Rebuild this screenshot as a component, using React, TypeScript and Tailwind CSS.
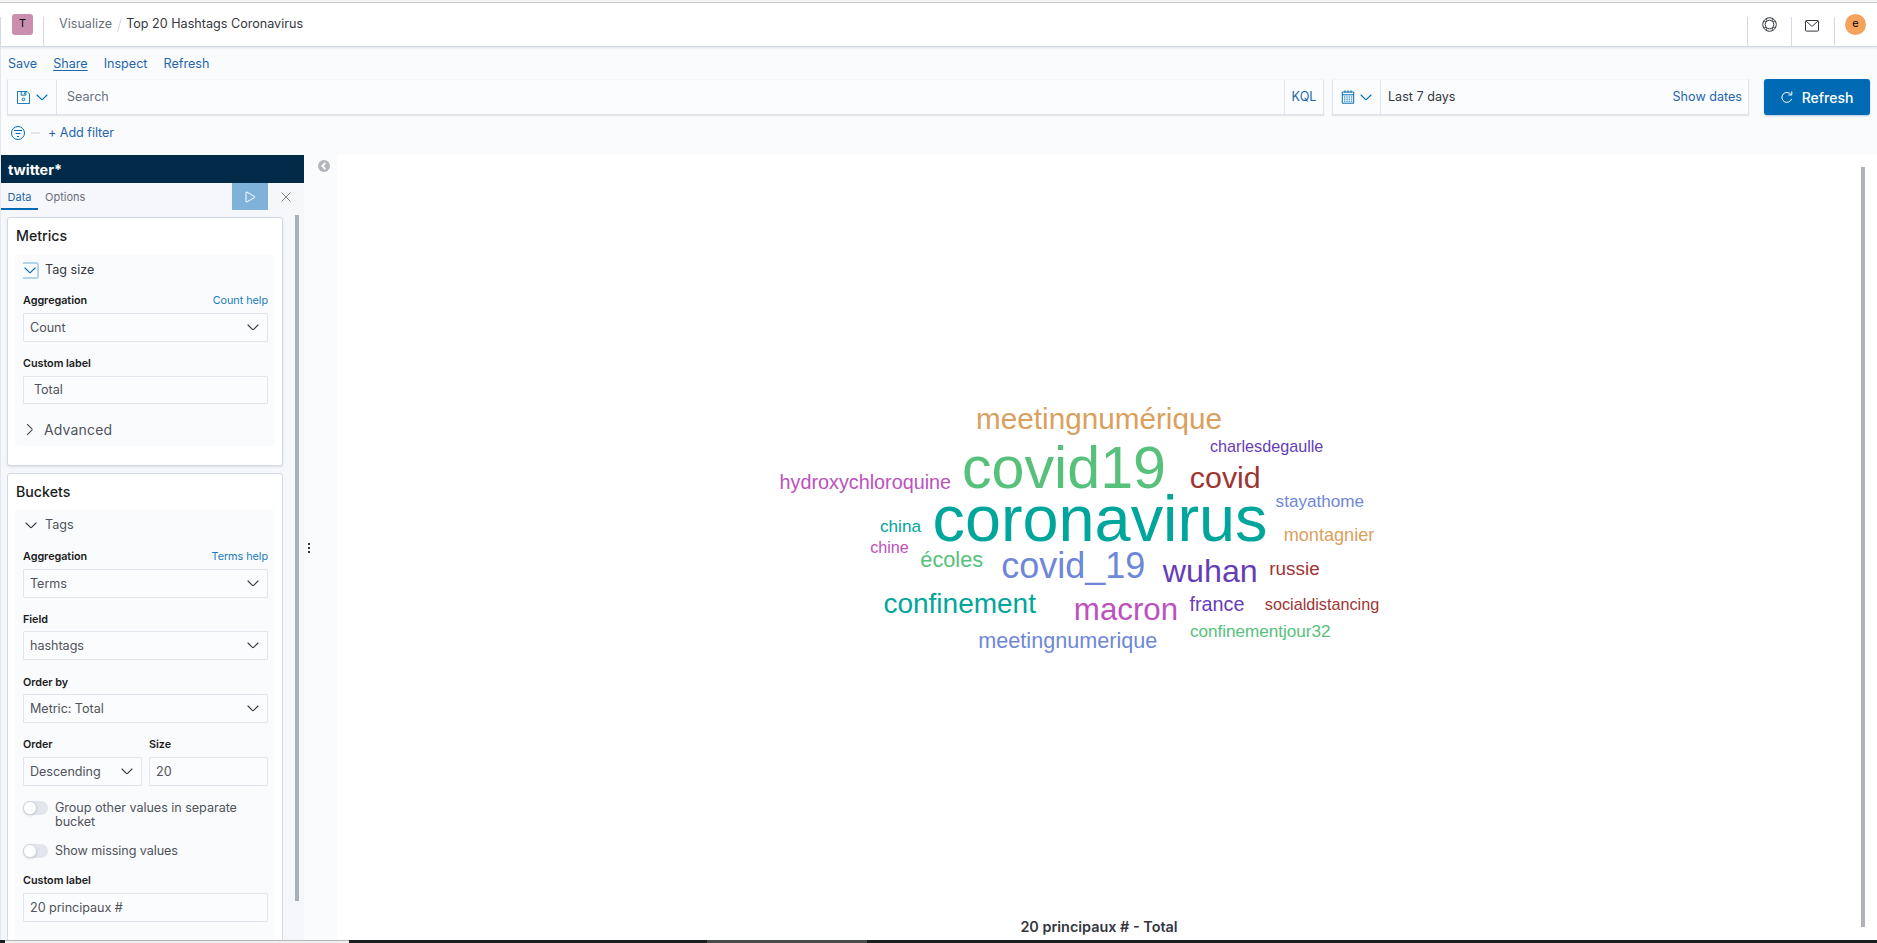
import React from "react";

type Word = { text: string; size: number; x: number; y: number; color: string };

const words: Word[] = [
  { text: "meetingnumérique", size: 29.7, x: 1099, y: 429, color: "#daa05d" },
  { text: "charlesdegaulle", size: 16.2, x: 1266.7, y: 452, color: "#663db8" },
  { text: "covid19", size: 59.2, x: 1064, y: 488, color: "#57c17b" },
  { text: "covid", size: 30.4, x: 1225.3, y: 488, color: "#9e3533" },
  { text: "hydroxychloroquine", size: 19.8, x: 865.3, y: 489, color: "#bc52bc" },
  { text: "stayathome", size: 17.1, x: 1319.8, y: 507, color: "#6f87d8" },
  { text: "coronavirus", size: 64.8, x: 1100, y: 541, color: "#00a69b" },
  { text: "montagnier", size: 18.1, x: 1329, y: 541, color: "#daa05d" },
  { text: "china", size: 17.1, x: 900.5, y: 532, color: "#00a69b" },
  { text: "chine", size: 16.2, x: 889.5, y: 553, color: "#bc52bc" },
  { text: "écoles", size: 21.7, x: 951.7, y: 567, color: "#57c17b" },
  { text: "covid_19", size: 36, x: 1073.3, y: 578, color: "#6f87d8" },
  { text: "wuhan", size: 32.2, x: 1210.3, y: 582, color: "#663db8" },
  { text: "russie", size: 18.9, x: 1294.5, y: 575, color: "#9e3533" },
  { text: "confinement", size: 28, x: 959.7, y: 613, color: "#00a69b" },
  { text: "macron", size: 31.3, x: 1126, y: 620, color: "#bc52bc" },
  { text: "france", size: 19.8, x: 1217, y: 611, color: "#663db8" },
  { text: "socialdistancing", size: 16.2, x: 1322, y: 610, color: "#9e3533" },
  { text: "meetingnumerique", size: 21.6, x: 1067.8, y: 648, color: "#6f87d8" },
  { text: "confinementjour32", size: 17.1, x: 1260.2, y: 637, color: "#57c17b" },
];

function Chevron({ className = "" }: { className?: string }) {
  return (
    <svg width="12" height="7" viewBox="0 0 12 7" fill="none" stroke="currentColor" strokeWidth="1.1" strokeLinecap="round" strokeLinejoin="round" className={className}>
      <path d="M1 1l4.4 4.4a.9.9 0 0 0 1.2 0L11 1" />
    </svg>
  );
}

function Label({ text, help }: { text: string; help?: string }) {
  return (
    <div className="flex h-[16px] items-center justify-between pt-[2px] text-[10.8px] font-semibold tracking-[-0.03px] text-[#1a1c21]">
      <span>{text}</span>
      {help && <span className="font-normal tracking-[-0.03px] text-[#1a7bbf]">{help}</span>}
    </div>
  );
}

function Box({ text, select, indent, short }: { text: string; select?: boolean; indent?: boolean; short?: boolean }) {
  return (
    <div className={`${short ? "h-[28px]" : "h-[29px]"} ${indent ? "pl-[10px]" : "pl-[6px]"} flex w-full items-center justify-between rounded-[1px] border border-[#e2e5ee] bg-[#fbfcfd] pr-[8px] text-[12.6px] tracking-[-0.04px] text-[#50535c]`}>
      <span className="pt-px">{text}</span>
      {select && <Chevron className="text-[#343741]" />}
    </div>
  );
}

function Toggle() {
  return (
    <span className="flex h-[14px] w-[25px] shrink-0 items-center rounded-full bg-[#e3e6ec]">
      <span className="h-[14px] w-[14px] rounded-full border border-[#d0d4dd] bg-white shadow-sm" />
    </span>
  );
}

function Header() {
  return (
    <header className="z-10 flex h-[44px] shrink-0 items-end border-b border-[#d3dae6] bg-white shadow-[0_1px_2px_rgba(152,162,179,0.3)]">
      <div className="flex h-[29px] w-[44px] border-x border-[#d3dae6] pl-[11px]">
        <span className="-mt-[3px] flex h-[21px] w-[21px] items-center justify-center rounded-[3px] bg-[#ca8eae] text-[10.8px] text-black">T</span>
      </div>
      <div className="flex h-[43px] flex-1 items-center pl-[15px] text-[12.6px]">
        <span className="text-[#69707d]">Visualize</span>
        <span className="ml-[7px] mr-[6px] h-[14px] w-px rotate-[15deg] bg-[#d3dae6]" />
        <span className="text-[#343741]">Top 20 Hashtags Coronavirus</span>
      </div>
      <div className="flex h-[29px] w-[44px] justify-center border-l border-[#d3dae6] text-[#343741]">
        <svg width="15" height="15" viewBox="0 0 15 15" fill="none" stroke="currentColor" className="-ml-px">
          <circle cx="7.5" cy="7.5" r="6.8" />
          <circle cx="7.5" cy="7.5" r="4.3" />
          <path d="M4.6 1.3v3M10.4 1.3v3M4.6 10.7v3M10.4 10.7v3M1.3 4.6h3M1.3 10.4h3M10.7 4.6h3M10.7 10.4h3" strokeWidth=".8" />
        </svg>
      </div>
      <div className="flex h-[29px] w-[43px] border-l border-[#d3dae6] pl-[13px] pt-[3px] text-[#343741]">
        <svg width="14" height="12" viewBox="0 0 14 12" fill="none" stroke="currentColor">
          <rect x=".5" y=".5" width="13" height="10.6" rx=".8" />
          <path d="M1 .9l5.3 5a1 1 0 0 0 1.4 0L13 .9" />
        </svg>
      </div>
      <div className="flex h-[29px] w-[43px] border-l border-[#d3dae6] pl-[10px]">
        <span className="-mt-[3px] flex h-[21px] w-[21px] items-center justify-center rounded-full bg-[#f5a35c] text-[10.8px] text-black">e</span>
      </div>
    </header>
  );
}

function QueryBar() {
  return (
    <div className="shrink-0">
      <nav className="flex h-[32px] items-center gap-[16px] pl-[7px] pt-[3px] text-[12.6px] text-[#1f66ad]">
        <span>Save</span>
        <span className="underline underline-offset-2">Share</span>
        <span>Inspect</span>
        <span>Refresh</span>
      </nav>
      <div className="flex h-[36px] pl-[6px] pr-[7px] text-[12.6px]">
        <div className="flex w-[1317px] border border-t-[#f3f5f9] border-[#e0e4ee] bg-[#fbfcfd] shadow-[0_1px_1px_rgba(152,162,179,0.25)]">
          <div className="flex w-[49px] items-center gap-[6px] border-r border-[#e0e4ee] pl-[9px] text-[#006bb4]">
            <svg width="13" height="13" viewBox="0 0 14 14" fill="none" stroke="currentColor">
              <path d="M.5.5h10.3l2.700 2.700v10.300H.5z" />
              <path d="M4.5.5v4h5v-4" />
              <path d="M8 1.500v2" />
              <circle cx="7" cy="9" r="1.400" />
            </svg>
            <Chevron />
          </div>
          <div className="flex flex-1 items-center pl-[10px] text-[#69707d]">Search</div>
          <div className="flex w-[39px] items-center justify-center border-l border-[#e0e4ee] text-[#1f66ad]">KQL</div>
        </div>
        <div className="ml-[8px] flex w-[417px] border border-t-[#f3f5f9] border-[#e0e4ee] bg-[#fbfcfd] shadow-[0_1px_1px_rgba(152,162,179,0.25)]">
          <div className="flex w-[48px] items-center gap-[5px] border-r border-[#e0e4ee] pl-[8px] text-[#006bb4]">
            <svg width="14" height="14" viewBox="0 0 14 14" fill="none" stroke="currentColor">
              <path d="M1.3 2h11.4v11.2H1.3zM1.3 4.8h11.4M4 .3v2.5M7 .3v2.5M10 .3v2.5" />
              <path d="M3 7h8.500M3 9.100h8.500M3 11.200h8.500" strokeDasharray="1.400 .9" />
            </svg>
            <Chevron />
          </div>
          <div className="flex flex-1 items-center justify-between pl-[7px] pr-[6px]">
            <span className="text-[#343741]">Last 7 days</span>
            <span className="text-[#1f66ad]">Show dates</span>
          </div>
        </div>
        <button className="ml-auto flex w-[106px] items-center justify-center gap-[9px] rounded-[3px] bg-[#006bb4] text-[14px] font-medium text-white shadow-[0_1px_2px_rgba(0,80,140,0.3)]">
          <svg width="12" height="13" viewBox="0 0 12 13" fill="none" stroke="currentColor" strokeLinecap="round">
            <path d="M9.800 3.200A5 5 0 1 0 10.600 8.200M10.800.7v3.300h-3" />
          </svg>
          <span>Refresh</span>
        </button>
      </div>
      <div className="flex h-[40px] items-center pb-[4px] pl-[10px] text-[12.6px] text-[#1f66ad]">
        <svg width="14" height="14" viewBox="0 0 14 14" fill="none" stroke="#006bb4">
          <circle cx="7" cy="7" r="6.500" />
          <path d="M3 4.500h8M4.500 7.500h5M6 10.500h2" />
        </svg>
        <span className="ml-[6px] mr-[8px] h-[2px] w-[9px] bg-[#e0e5ee]" />
        <span className="tracking-[-0.04px]">+ Add filter</span>
      </div>
    </div>
  );
}

function Sidebar() {
  return (
    <aside className="flex w-[303px] shrink-0 flex-col bg-[#f5f7fa]">
      <div className="flex h-[28px] shrink-0 items-center bg-[#002a48] pl-[7px] pt-[2px] text-[14.4px] font-bold text-white">twitter*</div>
      <div className="flex h-[27px] shrink-0 text-[11px]">
        <div className="flex w-[37px] items-center justify-center border-b-2 border-[#006bb4] pt-[3px] text-[#1f66ad]">Data</div>
        <div className="flex flex-1 items-center pl-[7px] pt-px text-[#69707d]">Options</div>
        <div className="flex w-[36px] items-center justify-center bg-[#7fb2d9] text-white">
          <svg width="11" height="12" viewBox="0 0 11 12" fill="none" stroke="currentColor" strokeLinejoin="round">
            <path d="M1 1.600v8.800c0 .5.5.8 1 .5l7.500-4.400c.5-.3.5-.7 0-1L2 1.100c-.5-.3-1 0-1 .5z" />
          </svg>
        </div>
        <div className="flex w-[36px] items-center justify-center text-[#7b818c]">
          <svg width="10" height="10" viewBox="0 0 10 10" stroke="currentColor">
            <path d="M.5.5l9 9M9.500.5l-9 9" />
          </svg>
        </div>
      </div>
      <div className="flex min-h-0 flex-1 overflow-hidden">
        <div className="flex w-[288px] flex-col gap-[7px] pl-[6px] pr-[6px] pt-[7px]">
          <section className="flex h-[249px] shrink-0 flex-col rounded-[3px] border border-[#d3dae6] bg-white px-[7px] shadow-[0_1px_2px_rgba(152,162,179,0.3)]">
            <h2 className="flex h-[36px] items-center pl-px text-[14.2px] font-medium text-[#1a1c21]">Metrics</h2>
            <div className="h-[192px] rounded-[3px] bg-[#fafbfd] pl-[8px] pr-[7px]">
              <div className="flex h-[32px] items-center text-[12.6px] text-[#343741]">
                <span className="flex h-[17px] w-[16px] items-center justify-center rounded-r-[3px] border-2 border-l-0 border-[#b2d3e9] text-[#006bb4]"><Chevron /></span>
                <span className="ml-[6px]">Tag size</span>
              </div>
              <div className="mt-[6px]"><Label text="Aggregation" help="Count help" /></div>
              <div className="mt-[5px]"><Box text="Count" select /></div>
              <div className="mt-[13px]"><Label text="Custom label" /></div>
              <div className="mt-[5px]"><Box text="Total" indent short /></div>
              <div className="mt-[15px] flex h-[20px] items-center text-[14px] tracking-[0.15px] text-[#50535c]">
                <span className="flex w-[14px] justify-center"><Chevron className="-rotate-90" /></span>
                <span className="ml-[7px]">Advanced</span>
              </div>
            </div>
          </section>
          <section className="flex h-[500px] shrink-0 flex-col rounded-[3px] border border-[#d3dae6] bg-white px-[7px]">
            <h2 className="flex h-[35px] items-center pl-px text-[14.2px] font-medium text-[#1a1c21]">Buckets</h2>
            <div className="flex-1 rounded-[3px] bg-[#fafbfd] pl-[8px] pr-[7px]">
              <div className="flex h-[32px] items-center text-[12.6px] text-[#50535c]">
                <Chevron className="ml-[2px] text-[#343741]" />
                <span className="ml-[8px] pt-px">Tags</span>
              </div>
              <div className="mt-[7px]"><Label text="Aggregation" help="Terms help" /></div>
              <div className="mt-[5px]"><Box text="Terms" select /></div>
              <div className="mt-[13px]"><Label text="Field" /></div>
              <div className="mt-[4px]"><Box text="hashtags" select /></div>
              <div className="mt-[14px]"><Label text="Order by" /></div>
              <div className="mt-[4px]"><Box text="Metric: Total" select /></div>
              <div className="mt-[13px] grid grid-cols-2 gap-x-[7px] gap-y-[5px]">
                <Label text="Order" />
                <Label text="Size" />
                <Box text="Descending" select />
                <Box text="20" />
              </div>
              <div className="mt-[15px] flex gap-[7px] text-[12.6px] leading-[14px] tracking-[-0.04px] text-[#50535c]">
                <Toggle />
                <span>Group other values in separate<br />bucket</span>
              </div>
              <div className="mt-[15px] flex items-center gap-[7px] text-[12.6px] leading-[14px] tracking-[-0.08px] text-[#50535c]">
                <Toggle />
                <span>Show missing values</span>
              </div>
              <div className="mt-[14px]"><Label text="Custom label" /></div>
              <div className="mt-[5px]"><Box text="20 principaux #" /></div>
            </div>
          </section>
        </div>
        <div className="ml-[6px] mt-[5px] h-[686px] w-[4px] bg-[#a9b1b8]" />
      </div>
    </aside>
  );
}

function TagCloud() {
  return (
    <main className="flex flex-1 bg-white">
      <div className="flex flex-1 flex-col items-center">
        <svg width="1524" height="760" viewBox="337 155 1524 760" fontFamily="'Liberation Sans', Arial, sans-serif" textAnchor="middle">
          {words.map((w) => (
            <text key={w.text} x={w.x} y={w.y} fontSize={w.size} fill={w.color}>{w.text}</text>
          ))}
        </svg>
        <div className="flex h-[22px] items-center pt-px text-[14.4px] font-semibold text-[#343741]">20 principaux # - Total</div>
      </div>
      <div className="mr-[12px] mt-[12px] h-[760px] w-[4px] bg-[#b1b3bb]" />
    </main>
  );
}

export default function App() {
  return (
    <div className="flex h-[943px] w-[1877px] flex-col overflow-hidden bg-[#fafbfd] font-['Inter','Liberation_Sans',sans-serif]">
      <div className="h-[3px] shrink-0 border-b border-[#cccccc] bg-[#f5f5f5]" />
      <Header />
      <div className="flex min-h-0 flex-1 flex-col border-l border-[#e3e7ef]">
        <QueryBar />
        <div className="flex min-h-0 flex-1">
          <Sidebar />
          <div className="flex w-[33px] shrink-0 flex-col">
            <svg width="12" height="12" viewBox="0 0 12 12" className="ml-[14px] mt-[5px]">
              <circle cx="6" cy="6" r="6" fill="#b2b5bb" />
              <path d="M7.300 3L4.300 6l3 3" fill="none" stroke="#fff" strokeWidth="1.800" />
            </svg>
            <div className="ml-[4px] mt-[371px] flex flex-col gap-[2px]">
              <span className="h-[2px] w-[2px] bg-[#343741]" />
              <span className="h-[2px] w-[2px] bg-[#343741]" />
              <span className="h-[2px] w-[2px] bg-[#343741]" />
            </div>
          </div>
          <TagCloud />
        </div>
      </div>
      <div className="flex h-[3px] shrink-0 bg-[#1b1e1f]">
        <div className="ml-[5px] w-[344px] border-t border-[#b5b5b5] bg-[#efefef]" />
        <div className="ml-[358px] w-[160px] bg-[#4a4c4c]" />
      </div>
    </div>
  );
}
